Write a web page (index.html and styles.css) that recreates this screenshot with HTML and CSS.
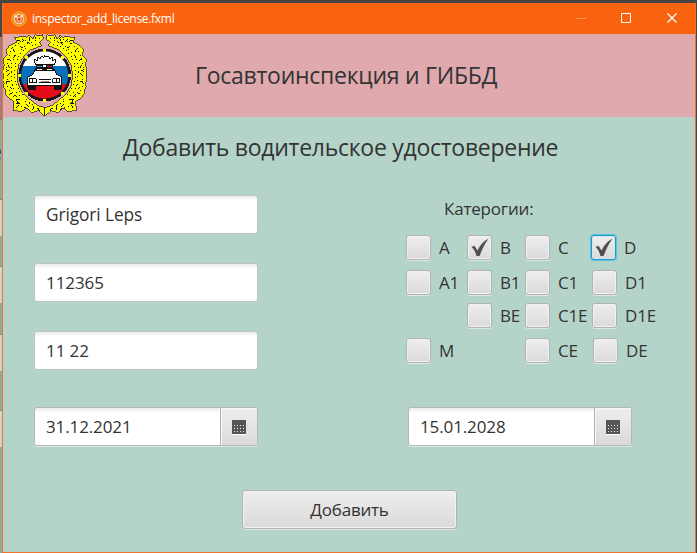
FILE: index.html
```html
<!DOCTYPE html>
<html lang="ru">
<head>
<meta charset="utf-8">
<title>inspector_add_license.fxml</title>
<link rel="stylesheet" href="styles.css">
</head>
<body>
<div class="behind" aria-hidden="true"><span class="behind-text">е</span><i class="sliver s1"></i><i class="sliver s2"></i><i class="sliver s3"></i><i class="sliver s4"></i></div>
<div class="window">
  <div class="titlebar">
    <svg class="app-icon" width="16" height="16" viewBox="0 0 16 16"><path d="M8 0 11 1 14.500 3.500 16 8 14.500 12.500 11 15 8 16 5 15 1.500 12.500 0 8 1.500 3.500 5 1z" fill="#f2a01f"/><circle cx="8" cy="8" r="5.600" fill="#e8641c"/><circle cx="8" cy="8" r="4.600" fill="none" stroke="#f9d3b8" stroke-width="1.200"/><path d="M3.500 5 6.500 6M12 4 10 6" stroke="#fff" stroke-width="1.400"/><circle cx="8.300" cy="8.300" r="2.200" fill="#e8471a" stroke="#ffe2cf"/></svg>
    <span class="caption">inspector_add_license.fxml</span>
    <svg class="controls" width="104" height="12" viewBox="0 0 104 12" fill="none"><path d="M0 6.500h10" stroke="#fb9455"/><path d="M45.500 1.500h9v9h-9z" stroke="#fff"/><path d="m91.500 1.500 9 9m0-9-9 9" stroke="#fff" stroke-width="1.200"/></svg>
  </div>
  <header class="header">
    <svg class="emblem" width="84" height="83" viewBox="0 0 84 83" shape-rendering="crispEdges">
      <defs>
        <g id="wreath">
          <path d="M128 14 116 18 105 14 98 28 88 14 82 22 72 20 44 22 50 36 30 46 18 60 22 75 9 88 13 105 8 122 11 140 8 152 13 160 10 170 17 180 15 190 27 205 42 214 40 242 65 244 80 234 95 248 115 242 134 258 134 233 112 226 88 207 68 190 55 165 51 135 56 105 71 80 91 60 125 47 118 37 130 28z" fill="#ff0" stroke="#111" stroke-width="2"/>
          <g fill="none" stroke="#181800" stroke-width="3">
            <path d="M120 24 98 35 80 43 62 60 45 76 36 96 33 118 36 139 35 157 42 176 53 192 68 208 94 225 119 238" stroke-dasharray="4 9"/>
            <path d="M109 42 89 49 73 58 57 77 47 98 44 119 43 144 49 164 60 186 82 211 104 230" stroke-dasharray="3 8"/>
            <path d="M89 22 72 33 54 42 36 55 29 72 22 95 19 118 22 142 19 166 32 188 49 208 65 230 88 238" stroke-dasharray="4 8"/>
            <path d="m50 30 12 4m4-6 7 6m18-11-4 9M38 56l5 9M24 86l8 6M17 118l9 5M19 156l10-3M28 193l10-5M50 233l6-8m5-17-12 1 5 12M48 219l10 3M98 240l3-12M119 243l-4-8M24 106l5 8M29 128l-5 7M29 170l7 7M42 194l8 6M78 222l8 8M108 20l-4 8M60 50l9 3M40 84l7-8M80 36l10 4"/>
          </g>
        </g>
        <clipPath id="disc"><circle cx="134" cy="135" r="71"/></clipPath>
      </defs>
      <g transform="translate(-3 -4) scale(.33333)">
        <use href="#wreath"/><use href="#wreath" transform="translate(269) scale(-1 1)"/>
        <circle cx="134" cy="135" r="79" fill="#171717"/>
        <g clip-path="url(#disc)"><path d="M58 58h155v50H58z" fill="#fff"/><path d="M58 108h155v54H58z" fill="#0871bd"/><path d="M58 162h155v55H58z" fill="#e60b18"/></g>
        <path d="M129 56h9v9h-9zM129 207h9v9h-9zM55 131h9v9h-9zM205 131h9v9h-9zM76 77h9v9h-9zM184 77h9v9h-9zM76 185h9v9h-9zM184 185h9v9h-9z" fill="#ff0"/>
        <path d="m106 104-3-17 9 5 1-10 8 4 4-9 6 5 3-6 4 6 7-5 4 9 8-4 1 10 9-5-3 17z" fill="#fff" stroke="#111" stroke-width="3"/>
        <path d="M108 103h52v12h-52z" fill="#111"/><path d="M112 107h15v5h-15z" fill="#2c99d6"/><path d="M140 107h15v5h-15z" fill="#e7212e"/><path d="M129 104h10v7h-10z" fill="#fff"/>
        <path d="m108 115-10 19-14 7-2 26h104v-26l-15-7-11-19z" fill="#fff" stroke="#111" stroke-width="3"/>
        <path d="M110 114h48l7 8h-61zM81 166h26v13H84zM161 166h26l-3 13h-23z" fill="#111"/><path d="M112 118h15v3h-15zM141 118h15v3h-15z" fill="#fff"/>
        <path d="M88 146h21v13H88zM159 146h21v13h-21zM116 150h36M116 159h36" fill="#fff" stroke="#111" stroke-width="3"/><path d="M98 145v15M170 145v15" stroke="#111" stroke-width="3"/><path d="M122 155h24" stroke="#888" stroke-width="3"/>
      </g>
    </svg>
    <h1 class="brand"><span>Госавтоинспекция и ГИББД</span></h1>
  </header>
  <main class="content">
    <h2 class="heading"><span>Добавить водительское удостоверение</span></h2>
    <div class="form">
      <div class="fields">
        <div class="field">Grigori Leps</div>
        <div class="field">112365</div>
        <div class="field">11 22</div>
      </div>
      <section class="categories">
        <div class="cat-title">Катерогии:</div>
        <div class="checks">
          <label class="check"><i class="box"></i><span>A</span></label>
          <label class="check"><i class="box"><svg class="tick" viewBox="0 0 18 19"><path d="M.5 9 3.500 7.800 6.500 12.500C9 7.500 12.500 3 17.500.5 13.500 6 11 12 8.500 18H5.500C4.500 14 3 11 .5 9z"/></svg></i><span>B</span></label>
          <label class="check"><i class="box"></i><span>C</span></label>
          <label class="check focus"><i class="box"><svg class="tick" viewBox="0 0 18 19"><path d="M.5 9 3.500 7.800 6.500 12.500C9 7.500 12.500 3 17.500.5 13.500 6 11 12 8.500 18H5.500C4.500 14 3 11 .5 9z"/></svg></i><span>D</span></label>
          <label class="check"><i class="box"></i><span>A1</span></label>
          <label class="check"><i class="box"></i><span>B1</span></label>
          <label class="check"><i class="box"></i><span>C1</span></label>
          <label class="check d1"><i class="box"></i><span>D1</span></label>
          <span></span>
          <label class="check"><i class="box"></i><span>BE</span></label>
          <label class="check"><i class="box"></i><span>C1E</span></label>
          <label class="check d1"><i class="box"></i><span>D1E</span></label>
          <label class="check"><i class="box"></i><span>M</span></label>
          <span></span>
          <label class="check"><i class="box"></i><span>CE</span></label>
          <label class="check de"><i class="box"></i><span>DE</span></label>
        </div>
      </section>
    </div>
    <div class="dates">
      <div class="date"><span class="value">31.12.2021</span><span class="picker"><svg width="14" height="15" shape-rendering="crispEdges"><path d="M0 0h14v14H0z" fill="#555"/><path d="M0 14h14v1H0z" fill="#fff"/><path d="M2 5.500h12M2 8.500h12M2 11.500h12" stroke="#eee" stroke-dasharray="1 2"/></svg></span></div>
      <div class="date"><span class="value">15.01.2028</span><span class="picker"><svg width="14" height="15" shape-rendering="crispEdges"><path d="M0 0h14v14H0z" fill="#555"/><path d="M0 14h14v1H0z" fill="#fff"/><path d="M2 5.500h12M2 8.500h12M2 11.500h12" stroke="#eee" stroke-dasharray="1 2"/></svg></span></div>
    </div>
    <button class="submit">Добавить</button>
  </main>
</div>
</body>
</html>
```

FILE: styles.css
```css
* { box-sizing: border-box; }
body {
  margin: 0;
  width: 697px;
  height: 553px;
  overflow: hidden;
  position: relative;
  padding: 3px 1px 0 2px;
  background: #454545;
  font-family: "Open Sans", "Noto Sans", sans-serif;
  font-size: 17px;
  color: #333;
}
.behind {
  position: absolute;
  left: 0;
  top: 37px;
  width: 2px;
  height: 516px;
  overflow: hidden;
  background: linear-gradient(#a07c80 0 83px, #8fa99f 83px);
}
.behind-text { position: absolute; right: 0; top: 99px; font-size: 24px; line-height: 30px; color: #222; }
.sliver { position: absolute; left: 0; width: 2px; height: 37px; background: #d2d2d2; border-top: 1px solid #888; }
.s1 { top: 162px; }
.s2 { top: 229px; }
.s3 { top: 297px; }
.s4 { top: 373px; }
.window {
  position: relative;
  height: 550px;
  border: 1px solid #f0732c;
  border-top: 0;
  background: #b5d4c9;
  display: flex;
  flex-direction: column;
}
.titlebar {
  height: 31px;
  flex: none;
  background: #f9630f;
  display: flex;
  align-items: center;
  padding: 0 15px 0 8px;
  color: #fff;
}
.caption { margin-left: 5px; font-size: 12px; letter-spacing: -0.3px; line-height: 16px; }
.controls { margin: 0 0 1px auto; }
.header {
  height: 83px;
  flex: none;
  background: #dfa9ae;
  display: flex;
  align-items: center;
}
.brand, .heading { margin: 0; font-weight: 400; font-size: 23px; line-height: 32px; white-space: nowrap; }
.brand { margin: -1px 0 0 108px; letter-spacing: -0.26px; }
.content { display: flex; flex-direction: column; padding: 14px 63px 0 31px; }
.heading { margin-left: 89px; letter-spacing: -0.27px; }
.form { display: flex; justify-content: space-between; margin-top: 32px; height: 212px; }
.fields { width: 224px; display: flex; flex-direction: column; gap: 29px; }
.field {
  height: 39px;
  border: 1px solid #bcc5c1;
  border-radius: 3px;
  background: linear-gradient(#ececec, #fff 5px);
  padding: 0 11px;
  line-height: 38px;
  letter-spacing: -0.08px;
}
.field:first-child { font-size: 17.3px; }
.categories { width: 226px; }
.cat-title { margin-left: 38px; height: 40px; line-height: 27px; letter-spacing: -0.2px; }
.checks { display: grid; grid-template-columns: 61px 58px 66px 41px; grid-template-rows: 35px 33px 35px 26px; }
.check { display: flex; align-items: flex-start; line-height: 25px; white-space: nowrap; letter-spacing: -0.2px; }
.check span { margin-left: 8px; }
.box {
  width: 25px;
  height: 25px;
  flex: none;
  border: 1px solid #b2b2b2;
  border-radius: 3px;
  background: linear-gradient(#eee, #dadada);
  box-shadow: inset 0 0 0 1px #f2f2f2, 0 1px #dce9e4;
}
.focus .box { border-color: #179ccb; box-shadow: inset 0 0 0 1px #cdeaf3, 0 0 1px 1px #62bdd5; }
.d1 { padding-left: 1px; }
.de { padding-left: 2px; }
.tick { display: block; width: 18px; height: 19px; margin: 2px 0 0 3px; fill: #505050; }
.dates { display: flex; justify-content: space-between; }
.date {
  display: flex;
  width: 224px;
  height: 39px;
  border: 1px solid #b3b7b5;
  border-radius: 3px;
  background: linear-gradient(#ececec, #fff 5px);
  box-shadow: 0 1px #dce9e4;
}
.value { flex: 1; padding-left: 11px; line-height: 38px; letter-spacing: -0.12px; }
.picker {
  width: 37px;
  border-left: 1px solid #b3b3b3;
  border-radius: 0 2px 2px 0;
  background: linear-gradient(#eee, #dadada);
  box-shadow: inset 1px 1px #f6f6f6;
  display: flex;
  align-items: center;
  justify-content: center;
  padding-top: 2px;
}
.submit {
  width: 215px;
  height: 39px;
  margin: 44px 0 0 208px;
  border: 1px solid #b2b2b2;
  border-radius: 3px;
  background: linear-gradient(#eee, #dadada);
  box-shadow: inset 0 0 0 1px #f2f2f2, 0 1px #dce9e4;
  font: inherit;
  color: inherit;
  letter-spacing: -0.2px;
  padding: 0;
}
```
